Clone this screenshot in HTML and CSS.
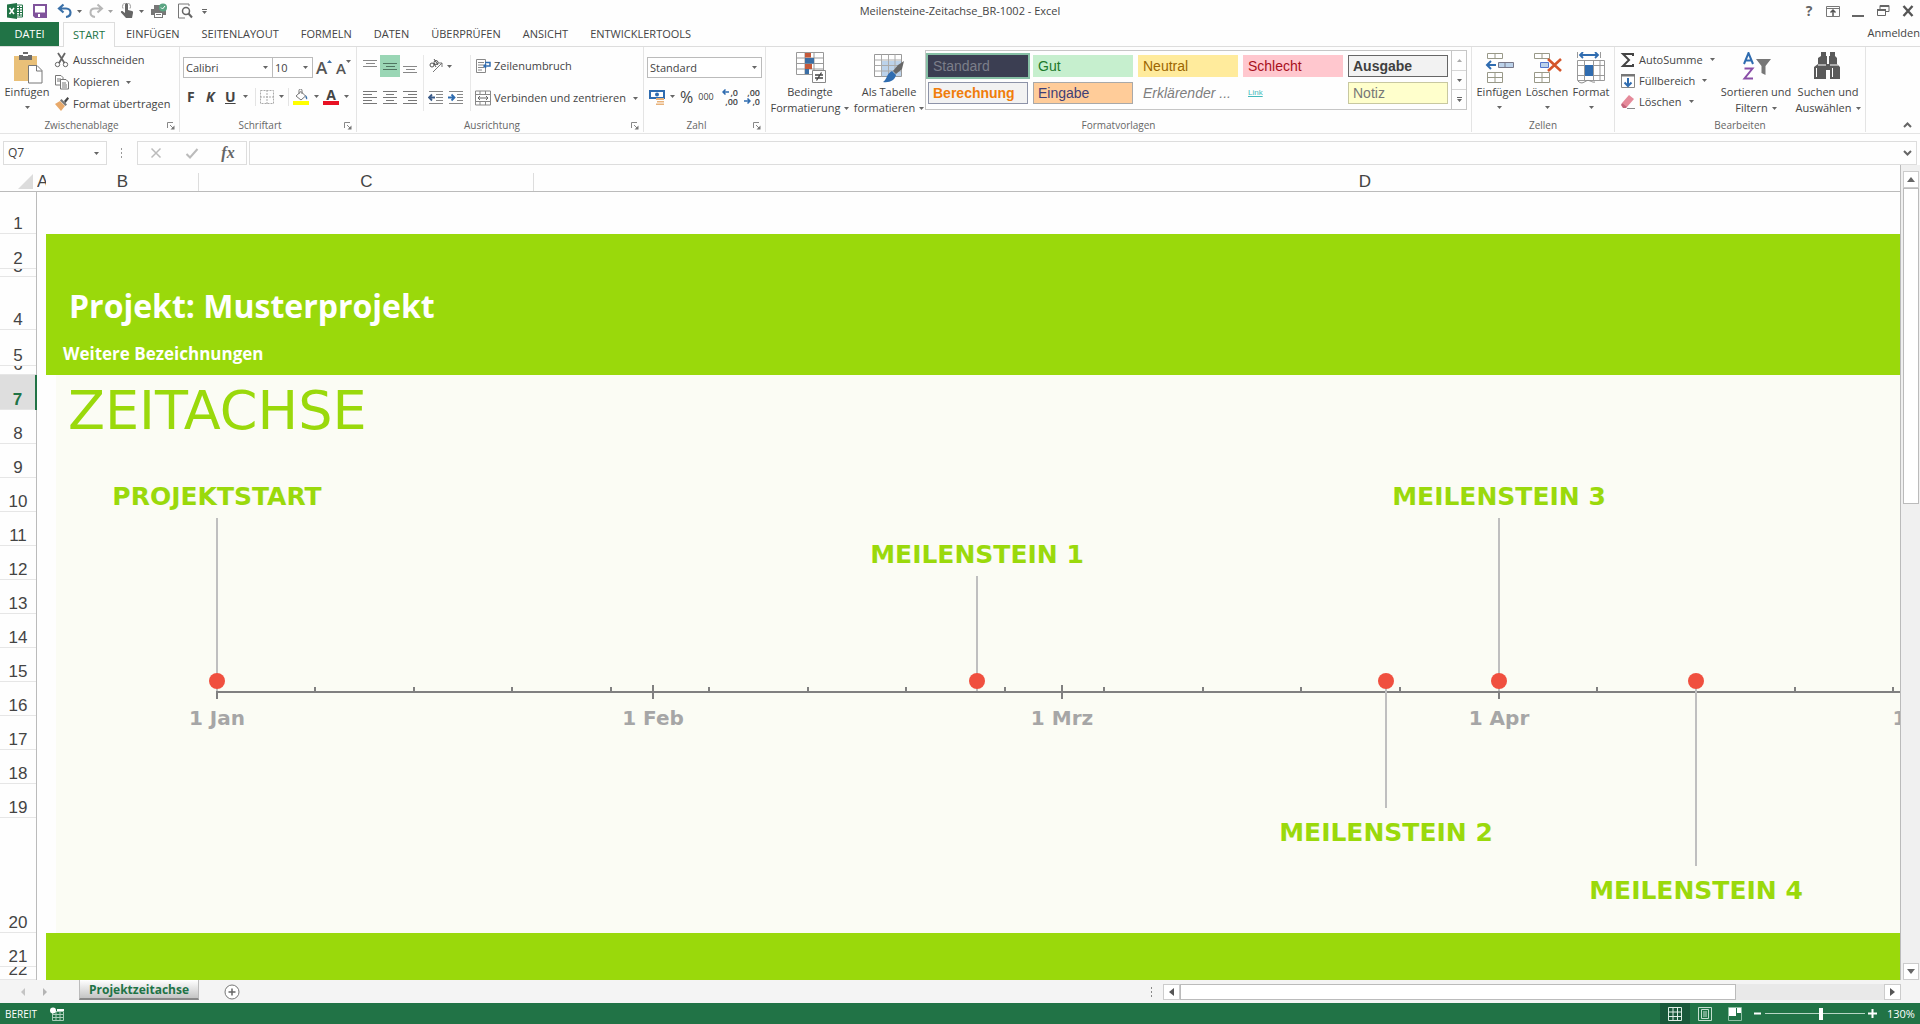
FILE: index.html
```html
<!DOCTYPE html>
<html lang="de">
<head>
<meta charset="utf-8">
<title>Meilensteine-Zeitachse_BR-1002 - Excel</title>
<link rel="stylesheet" href="styles.css">
</head>
<body>
<svg class="defs" aria-hidden="true">
  <symbol id="arr" viewBox="0 0 5 3"><path d="M0 0h5L2.500 3z" fill="#666"/></symbol>
  <symbol id="launch" viewBox="0 0 8 8"><path d="M.5 6V.5H6M3 3l3 3" fill="none" stroke="#888"/><path d="M7.500 3.500v4h-4z" fill="#777"/></symbol>
</svg>

<header class="titlebar">
  <div class="quick">
    <svg class="ic16" viewBox="0 0 16 16"><path d="M9 2h6.500v12H9z" fill="#fff" stroke="#217346"/><path d="M10 4.500h5M10 7h5M10 9.500h5M10 12h5M12.500 3v10" stroke="#217346"/><path d="M0 1.500L10 0v16L0 14.500z" fill="#217346"/><path d="M2.500 5l4.500 6M7 5l-4.500 6" stroke="#fff" stroke-width="1.600"/></svg>
    <button aria-label="Speichern"><svg class="ic16" viewBox="0 0 16 16"><path d="M2 2h12v12H3.500L2 12.500z" fill="#fff" stroke="#80539b" stroke-width="2"/><path d="M3 9.500h10V14H3z" fill="#80539b"/><path d="M6 11h2v3H6z" fill="#fff"/></svg></button>
    <button aria-label="Rückgängig" class="wide"><svg class="ic16" viewBox="0 0 16 16"><path d="M6.500 1.500L2 5.500l4.500 4M2.500 5.500H9c6 0 6 8 0 8.500" fill="none" stroke="#3a70a8" stroke-width="2.200"/></svg><svg class="arr"><use href="#arr"/></svg></button>
    <button aria-label="Wiederholen" class="wide faded"><svg class="ic16" viewBox="0 0 16 16"><path d="M9.500 1.500L14 5.500l-4.500 4M13.500 5.500H7c-6 0-6 8 0 8.500" fill="none" stroke="#888" stroke-width="2"/></svg><svg class="arr"><use href="#arr"/></svg></button>
    <button aria-label="Touch-/Mausmodus" class="wide"><svg class="ic16" viewBox="0 0 16 16"><path d="M6 1.500a1.500 1.500 0 0 1 3 0V7l4 1c1 .3 1.200 1 1 2l-1 5H7L2 9.500c-.6-1 .8-2 2-1l2 1.500z" fill="#666"/><path d="M4 5.500a4 4 0 1 1 7 0" fill="none" stroke="#999"/></svg><svg class="arr"><use href="#arr"/></svg></button>
    <button aria-label="Schnelldruck"><svg class="ic18" viewBox="0 0 18 16"><path d="M4 6V2h8v4M1 6h15v6h-3v3H4v-3H1z" fill="#777"/><path d="M5 10h7v4H5z" fill="#fff"/><path d="M6 11.500h5" stroke="#777"/><circle cx="13" cy="4.500" r="4" fill="#5ba583"/><path d="M11 4.500l1.500 1.500L15 3" fill="none" stroke="#fff"/></svg></button>
    <button aria-label="Seitenansicht"><svg class="ic16" viewBox="0 0 16 16"><path d="M12 3V1H1.500v14H8" fill="none" stroke="#777"/><circle cx="9" cy="8" r="3.500" fill="#fff" stroke="#666" stroke-width="1.500"/><path d="M11.500 10.500L15 14.500" stroke="#666" stroke-width="2"/></svg></button>
    <button aria-label="Symbolleiste anpassen"><svg class="arr over" viewBox="0 0 5 5"><path d="M0 0h5v1H0zM0 2h5L2.500 5z" fill="#666"/></svg></button>
  </div>
  <h1 class="doc">Meilensteine-Zeitachse_BR-1002 - Excel</h1>
  <div class="window">
    <button aria-label="Hilfe" class="help">?</button>
    <button aria-label="Menüband-Anzeigeoptionen"><svg class="ic14" viewBox="0 0 14 14"><path d="M.5 2.500h13v10H.5zM.5 4.500h13" fill="none" stroke="#777"/><path d="M7 12V7M4.500 8.500L7 6l2.500 2.500" fill="none" stroke="#555" stroke-width="1.500"/></svg></button>
    <button aria-label="Minimieren"><svg class="ic14" viewBox="0 0 14 14"><path d="M1 11h12v2H1z" fill="#666"/></svg></button>
    <button aria-label="Verkleinern"><svg class="ic14" viewBox="0 0 14 14"><path d="M4 5V1.500h9v6h-3M1.500 5.500h8v6h-8z" fill="none" stroke="#666"/><path d="M4 1h9v2H4zM1 5h9v2H1z" fill="#666"/></svg></button>
    <button aria-label="Schließen"><svg class="ic14" viewBox="0 0 14 14"><path d="M2.500 2l9 10M11.500 2l-9 10" stroke="#555" stroke-width="2.400"/></svg></button>
  </div>
</header>

<nav class="tabs">
  <button class="file">DATEI</button>
  <button class="active">START</button>
  <button>EINFÜGEN</button>
  <button>SEITENLAYOUT</button>
  <button>FORMELN</button>
  <button>DATEN</button>
  <button>ÜBERPRÜFEN</button>
  <button>ANSICHT</button>
  <button>ENTWICKLERTOOLS</button>
  <a href="#" class="login">Anmelden</a>
</nav>

<section class="ribbon">
  <div class="group g-clip">
    <div class="body">
      <button class="big"><svg class="ic32" viewBox="0 0 32 32"><path d="M3 4h23v25H3z" fill="#e9c078"/><path d="M8 3h4V0h5v3h4v5H8z" fill="#6b6b6b"/><path d="M12 2h5v2h-5z" fill="#fff"/><path d="M17.500 13.500H26l5 5V31H17.500z" fill="#fff" stroke="#777"/><path d="M25.500 13.500V19H31" fill="none" stroke="#777"/></svg><span>Einfügen</span><svg class="arr below"><use href="#arr"/></svg></button>
      <div class="stack s22">
        <button><svg class="ic16" viewBox="0 0 16 16"><path d="M4 1l6.500 10M11 1L5 11" stroke="#666" stroke-width="1.800"/><circle cx="3.500" cy="12.500" r="2.200" fill="none" stroke="#666"/><circle cx="11.500" cy="12.500" r="2.200" fill="none" stroke="#666"/></svg>Ausschneiden</button>
        <button><svg class="ic16" viewBox="0 0 16 16"><path d="M1.500 1.500H7l2 2V11H1.500zM3 5h4M3 7h4" fill="#fff" stroke="#777"/><path d="M6.500 5.500H12l2.500 2.500v7h-8zM8 9h4M8 11h5M8 13h5" fill="#fff" stroke="#777"/></svg>Kopieren<svg class="arr"><use href="#arr"/></svg></button>
        <button><svg class="ic16" viewBox="0 0 16 16"><path d="M1 8l5-3 5 5-4 5z" fill="#e8a96a"/><path d="M6 4.500l5.500 5.500 1.500-1.500L7.500 3z" fill="#777"/><path d="M10 5l3.500-4 1.500 1.500L11.500 7z" fill="#444"/></svg>Format übertragen</button>
      </div>
    </div>
    <div class="caption launcher">Zwischenablage<svg class="launch"><use href="#launch"/></svg></div>
  </div>

  <div class="group g-font">
    <div class="body rows">
      <div class="line">
        <span class="pick font"><select aria-label="Schriftart"><option>Calibri</option></select><svg class="arr"><use href="#arr"/></svg></span><span class="pick size"><select aria-label="Schriftgrad"><option>10</option></select><svg class="arr"><use href="#arr"/></svg></span>
        <button aria-label="Vergrößern" class="grow">A<svg class="mark" viewBox="0 0 5 3"><path d="M0 3h5L2.500 0z" fill="#3a70a8"/></svg></button>
        <button aria-label="Verkleinern" class="grow small">A<svg class="mark"><use href="#arr"/></svg></button>
      </div>
      <div class="line marks">
        <button class="chr"><b>F</b></button>
        <button class="chr"><b><i>K</i></b></button>
        <button class="chr u"><b>U</b><svg class="arr"><use href="#arr"/></svg></button>
        <i class="bar"></i>
        <button aria-label="Rahmen"><svg class="ic14" viewBox="0 0 14 14"><path d="M.5.500h13v13H.5zM7 0v14M0 7h14" fill="none" stroke="#aaa" stroke-dasharray="2 1"/></svg><svg class="arr"><use href="#arr"/></svg></button>
        <i class="bar"></i>
        <button aria-label="Füllfarbe"><svg class="ic16" viewBox="0 0 16 16"><path d="M3 7l5-4.500L12.500 7 8 11z" fill="#fff" stroke="#777"/><path d="M6 5V1.500a1.500 1.500 0 0 1 3 0V5" fill="none" stroke="#777"/><path d="M12.500 6c2 2 2 3 1.500 4.500-1-.5-2-2-1.500-4.500z" fill="#3a70a8"/><path d="M0 12h16v4H0z" fill="#ff0"/></svg><svg class="arr"><use href="#arr"/></svg></button>
        <button aria-label="Schriftfarbe" class="fc"><span>A</span><svg class="arr"><use href="#arr"/></svg></button>
      </div>
    </div>
    <div class="caption launcher">Schriftart<svg class="launch"><use href="#launch"/></svg></div>
  </div>

  <div class="group g-align">
    <div class="body cols">
      <div class="aligns">
        <button aria-label="Oben"><svg class="ic14" viewBox="0 0 14 14"><path d="M0 1.500h14M3 4.500h9M0 7.500h14" stroke="#888"/></svg></button>
        <button aria-label="Mitte" class="on"><svg class="ic14" viewBox="0 0 14 14"><path d="M0 4.500h14M3 7.500h9M0 10.500h14" stroke="#4f7561"/></svg></button>
        <button aria-label="Unten"><svg class="ic14" viewBox="0 0 14 14"><path d="M0 7.500h14M3 10.500h9M0 13.500h14" stroke="#888"/></svg></button>
        <button aria-label="Links"><svg class="ic14" viewBox="0 0 14 14"><path d="M0 .5h14M0 3.500h9M0 6.500h14M0 9.500h9M0 12.500h14" stroke="#777"/></svg></button>
        <button aria-label="Zentriert"><svg class="ic14" viewBox="0 0 14 14"><path d="M0 .5h14M3 3.500h8M0 6.500h14M3 9.500h8M0 12.500h14" stroke="#777"/></svg></button>
        <button aria-label="Rechts"><svg class="ic14" viewBox="0 0 14 14"><path d="M0 .5h14M5 3.500h9M0 6.500h14M5 9.500h9M0 12.500h14" stroke="#777"/></svg></button>
      </div>
      <div class="indents">
        <button aria-label="Ausrichtung" class="orient"><svg class="ic16" viewBox="0 0 16 16"><path d="M5 14L14 5M14 9V5h-4" fill="none" stroke="#777"/><circle cx="4" cy="7" r="2" fill="none" stroke="#555"/><circle cx="8" cy="4.500" r="2" fill="none" stroke="#555"/><path d="M5.500 5l2.500 4M6 1l4 6" stroke="#555"/></svg><svg class="arr"><use href="#arr"/></svg></button>
        <button aria-label="Einzug verkleinern"><svg class="ic16" viewBox="0 0 16 16"><path d="M1 1.500h14M8 4.500h7M8 7.500h7M8 10.500h7M1 13.500h14" stroke="#888"/><path d="M7 7.500H1M4 4.500l-3 3 3 3" fill="none" stroke="#3a5a88" stroke-width="1.800"/></svg></button>
        <button aria-label="Einzug vergrößern"><svg class="ic16" viewBox="0 0 16 16"><path d="M1 1.500h14M9 4.500h6M9 7.500h6M9 10.500h6M1 13.500h14" stroke="#888"/><path d="M0 7.500h6M3.500 4.500l3 3-3 3" fill="none" stroke="#2f6cb0" stroke-width="1.800"/></svg></button>
      </div>
      <div class="wraps">
        <button><svg class="ic16" viewBox="0 0 16 16"><path d="M1.500 1.500h9v13h-9zM3 4.500h6M3 7h6M3 9.500h6M3 12h4" fill="none" stroke="#888"/><path d="M10 4.500h5V8H9M11 6L9 8l2 2" fill="none" stroke="#2f6cb0" stroke-width="1.500"/></svg>Zeilenumbruch</button>
        <button><svg class="ic16" viewBox="0 0 16 16"><path d="M.5 1h15v14H.5zM.5 4.500h15M.5 11.500h15M5 1v3.500M10.500 1v3.500M5 11.500V15M10.500 11.500V15" fill="none" stroke="#888"/><path d="M3 8h10M5 6L3 8l2 2M11 6l2 2-2 2" fill="none" stroke="#666"/></svg>Verbinden und zentrieren<svg class="arr"><use href="#arr"/></svg></button>
      </div>
    </div>
    <div class="caption launcher">Ausrichtung<svg class="launch"><use href="#launch"/></svg></div>
  </div>

  <div class="group g-num">
    <div class="body rows">
      <div class="line"><span class="pick num"><select aria-label="Zahlenformat"><option>Standard</option></select><svg class="arr"><use href="#arr"/></svg></span></div>
      <div class="line numbers">
        <button aria-label="Buchhaltungszahlenformat"><svg class="ic16" viewBox="0 0 16 16"><path d="M1 2h14v7H1z" fill="#fff" stroke="#2f6cb0" stroke-width="2"/><circle cx="8" cy="5.500" r="2" fill="#2f6cb0"/><path d="M7 9h8v2H7zM8 12h7v1.500H8zM7 14.500h8V16H7z" fill="#e8b27a"/></svg><svg class="arr"><use href="#arr"/></svg></button>
        <button class="pct">%</button>
        <button class="thou">000</button>
        <button class="dec" aria-label="Dezimalstelle hinzufügen"><span><svg class="mini" viewBox="0 0 7 6"><path d="M7 3H1M3.500.500L1 3l2.500 2.500" fill="none" stroke="#2f6cb0" stroke-width="1.500"/></svg>,0</span><span>,00</span></button>
        <button class="dec" aria-label="Dezimalstelle löschen"><span>,00</span><span><svg class="mini" viewBox="0 0 7 6"><path d="M0 3h6M3.500.500L6 3 3.500 5.500" fill="none" stroke="#2f6cb0" stroke-width="1.500"/></svg>,0</span></button>
      </div>
    </div>
    <div class="caption launcher">Zahl<svg class="launch"><use href="#launch"/></svg></div>
  </div>

  <div class="group g-style">
    <div class="body">
      <button class="big w1"><svg class="ic32" viewBox="0 0 32 32"><path d="M2.500.500h27v22h-27zM2.500 6h27M2.500 11.500h27M2.500 17h27M11 .5v22M20 .5v22" fill="#fff" stroke="#999"/><path d="M11 1h6v4.500h-6zM11 12h7v5h-7z" fill="#c5593a"/><path d="M11 6h9v5.500h-9zM11 17h4v5h-4z" fill="#3a6ea5"/><path d="M18.500 18.500h13v12h-13z" fill="#fff" stroke="#888"/><path d="M21 23h8M21 26h8M27.500 20.500l-5 8" stroke="#444" stroke-width="1.300"/></svg><span>Bedingte</span><span>Formatierung<svg class="arr"><use href="#arr"/></svg></span></button>
      <button class="big w2"><svg class="ic32" viewBox="0 0 32 32"><path d="M1.500 2.500h27v22h-27z" fill="#fff" stroke="#999"/><path d="M9 9h19v15H9z" fill="#bcd2ea"/><path d="M1.500 8h27M1.500 13.500h27M1.500 19h27M8.500 2.500v22M15.500 2.500v22M22 2.500v22" fill="none" stroke="#aaa"/><path d="M31 9l-2 8-6 5-3-3 5-6z" fill="#666"/><path d="M19 19l4 4c-1 5-6 8-13 7 4-2 3-8 9-11z" fill="#2f6cb0"/></svg><span>Als Tabelle</span><span>formatieren<svg class="arr"><use href="#arr"/></svg></span></button>
      <div class="gallery">
        <div class="styles">
          <button class="st-std">Standard</button><button class="st-gut">Gut</button><button class="st-neu">Neutral</button><button class="st-bad">Schlecht</button><button class="st-out">Ausgabe</button>
          <button class="st-calc">Berechnung</button><button class="st-in">Eingabe</button><button class="st-exp">Erklärender ...</button><button class="st-link">Link</button><button class="st-note">Notiz</button>
        </div>
        <div class="steps">
          <button aria-label="Nach oben"><svg class="arr dim" viewBox="0 0 5 3"><path d="M0 3h5L2.500 0z" fill="#aaa"/></svg></button>
          <button aria-label="Nach unten"><svg class="arr"><use href="#arr"/></svg></button>
          <button aria-label="Weitere"><svg class="arr over" viewBox="0 0 5 5"><path d="M0 0h5v1H0zM0 2h5L2.500 5z" fill="#666"/></svg></button>
        </div>
      </div>
    </div>
    <div class="caption">Formatvorlagen</div>
  </div>

  <div class="group g-cells">
    <div class="body">
      <button class="big"><svg class="ic32" viewBox="0 0 32 32"><path d="M4.500 1.500h15v5h-15zM12 1.500v5M4.500 20.500h15v10h-15zM12 20.500v10M4.500 25.500h15" fill="#fff" stroke="#998"/><path d="M15.500 10.500h15v5h-15zM22 10.500v5" fill="#bcd2ea" stroke="#778"/><path d="M13 13H4M8 9l-4 4 4 4" fill="none" stroke="#2f6cb0" stroke-width="2"/></svg><span>Einfügen</span><svg class="arr below"><use href="#arr"/></svg></button>
      <button class="big"><svg class="ic32" viewBox="0 0 32 32"><path d="M3.500 1.500h15v5h-15zM11 1.500v5M3.500 20.500h15v10h-15zM11 20.500v10M3.500 25.500h15" fill="#fff" stroke="#998"/><path d="M9.500 10.500h8v5h-8z" fill="#bcd2ea" stroke="#57c"/><path d="M17 7l13 12M30 7L17 19" stroke="#d4552b" stroke-width="2.600"/></svg><span>Löschen</span><svg class="arr below"><use href="#arr"/></svg></button>
      <button class="big"><svg class="ic32" viewBox="0 0 32 32"><path d="M2.500 0v6M25.500 0v6" stroke="#999"/><path d="M5 3h18M8 0L5 3l3 3M20 0l3 3-3 3" fill="none" stroke="#2f6cb0" stroke-width="1.800"/><path d="M2.500 8.500h27v20h-27zM2.500 13.500h27M2.500 23.500h27M9.500 8.500v20M18.500 8.500v20M25 8.500v20" fill="#fff" stroke="#999"/><path d="M10 13h8v11h-8z" fill="#2f6cb0"/><path d="M3 29c3 3 5 2 8 0s6 2 9 1" fill="none" stroke="#888"/></svg><span>Format</span><svg class="arr below"><use href="#arr"/></svg></button>
    </div>
    <div class="caption">Zellen</div>
  </div>

  <div class="group g-edit">
    <div class="body">
      <div class="stack s21">
        <button><svg class="ic16" viewBox="0 0 16 16"><path d="M13 4V2H3l6 6-6 6h10v-2" fill="none" stroke="#444" stroke-width="2"/></svg>AutoSumme<svg class="arr"><use href="#arr"/></svg></button>
        <button><svg class="ic16" viewBox="0 0 16 16"><path d="M1.500 1.500h13v13h-13z" fill="#fff" stroke="#888"/><path d="M1 1h14v2.500H1z" fill="#777"/><path d="M8 5v8M4.500 9.500L8 13l3.500-3.500" fill="none" stroke="#2f6cb0" stroke-width="2"/></svg>Füllbereich<svg class="arr"><use href="#arr"/></svg></button>
        <button><svg class="ic16" viewBox="0 0 16 16"><path d="M2 9l7-8 5 4-7 8H4z" fill="#e58a9a"/><path d="M2 9l5 4-1 1H3L1 11z" fill="#c4647a"/><path d="M7 14.500h8" stroke="#888"/></svg>Löschen<svg class="arr"><use href="#arr"/></svg></button>
      </div>
      <button class="big w3"><svg class="ic32" viewBox="0 0 32 32"><path d="M4 12L8.500 1l4.500 11M5.500 8.500h6" fill="none" stroke="#2f6cb0" stroke-width="2"/><path d="M4.500 16.500h8l-8 10h8.500" fill="none" stroke="#8a4fa8" stroke-width="2"/><path d="M16 7h15l-5.500 7v9l-4-2v-7z" fill="#777"/></svg><span>Sortieren und</span><span>Filtern<svg class="arr"><use href="#arr"/></svg></span></button>
      <button class="big w4"><svg class="ic32" viewBox="0 0 32 32"><path d="M9 0h5v4h1v8h2V4h1V0h5v4l2 2v6l3 3v12H18v-9h-4v9H2V15l4-3V6l3-2z" fill="#5a5a5a"/><path d="M6 13h8M18 13h8M4.500 16v9M20.500 16v9" stroke="#fff"/></svg><span>Suchen und</span><span>Auswählen<svg class="arr"><use href="#arr"/></svg></span></button>
    </div>
    <div class="caption">Bearbeiten</div>
  </div>
  <button class="collapse" aria-label="Menüband reduzieren"><svg viewBox="0 0 9 6"><path d="M1 5l3.500-3.500L8 5" fill="none" stroke="#666" stroke-width="2"/></svg></button>
</section>

<section class="formula">
  <span class="pick name"><input aria-label="Namenfeld" value="Q7"><svg class="arr"><use href="#arr"/></svg></span>
  <svg class="dots" viewBox="0 0 3 11"><path d="M1 1h1v2H1zM1 5h1v2H1zM1 9h1v2H1z" fill="#999"/></svg>
  <div class="fx">
    <button aria-label="Abbrechen"><svg class="ic14" viewBox="0 0 14 14"><path d="M2.500 2.500l9 9M11.500 2.500l-9 9" stroke="#bbb" stroke-width="1.500"/></svg></button>
    <button aria-label="Eingeben"><svg class="ic14" viewBox="0 0 14 14"><path d="M1.500 8l3.500 3.500L12.500 3" fill="none" stroke="#bbb" stroke-width="2"/></svg></button>
    <button class="fn" aria-label="Funktion einfügen">fx</button>
  </div>
  <div class="entry"><input aria-label="Bearbeitungsleiste"><svg viewBox="0 0 9 6"><path d="M1 1l3.500 3.500L8 1" fill="none" stroke="#666" stroke-width="2"/></svg></div>
</section>

<main class="work">
  <div class="sheet">
    <table>
      <colgroup><col class="c-head"><col class="c-a"><col class="c-b"><col class="c-c"><col class="c-d"></colgroup>
      <thead><tr><th><svg class="corner" viewBox="0 0 15 15"><path d="M15 0v15H0z" fill="#dcdcdc"/></svg></th><th class="colname first">A</th><th class="colname">B</th><th class="colname">C</th><th class="colname">D</th></tr></thead>
      <tbody>
        <tr><th><span class="r42">1</span></th><td colspan="4"></td></tr>
        <tr><th><span class="r35">2</span></th><td></td><td colspan="3" class="green"></td></tr>
        <tr><th><span class="r8">3</span></th><td></td><td colspan="3" class="green"></td></tr>
        <tr><th><span class="r53">4</span></th><td></td><td colspan="3" class="green title">Projekt: Musterprojekt</td></tr>
        <tr><th><span class="r36">5</span></th><td></td><td colspan="3" class="green sub">Weitere Bezeichnungen</td></tr>
        <tr><th><span class="r9">6</span></th><td></td><td colspan="3" class="green"></td></tr>
        <tr><th class="current"><span class="r35">7</span></th><td colspan="4"></td></tr>
        <tr><th><span class="r34">8</span></th><td colspan="4"></td></tr>
        <tr><th><span class="r34">9</span></th><td colspan="4"></td></tr>
        <tr><th><span class="r34">10</span></th><td colspan="4"></td></tr>
        <tr><th><span class="r34">11</span></th><td colspan="4"></td></tr>
        <tr><th><span class="r34">12</span></th><td colspan="4"></td></tr>
        <tr><th><span class="r34">13</span></th><td colspan="4"></td></tr>
        <tr><th><span class="r34">14</span></th><td colspan="4"></td></tr>
        <tr><th><span class="r34">15</span></th><td colspan="4"></td></tr>
        <tr><th><span class="r34">16</span></th><td colspan="4"></td></tr>
        <tr><th><span class="r34">17</span></th><td colspan="4"></td></tr>
        <tr><th><span class="r34">18</span></th><td colspan="4"></td></tr>
        <tr><th><span class="r34">19</span></th><td colspan="4"></td></tr>
        <tr><th><span class="r115">20</span></th><td colspan="4"></td></tr>
        <tr><th><span class="r34">21</span></th><td></td><td colspan="3" class="green"></td></tr>
        <tr><th><span class="r13">22</span></th><td></td><td colspan="3" class="green"></td></tr>
      </tbody>
    </table>
    <div class="chart">
      <h2>ZEITACHSE</h2>
      <div class="axis"></div>
      <i class="tick major" style="left:161px"></i><i class="tick" style="left:259px"></i><i class="tick" style="left:358px"></i><i class="tick" style="left:456px"></i><i class="tick" style="left:555px"></i>
      <i class="tick major" style="left:597px"></i><i class="tick" style="left:653px"></i><i class="tick" style="left:752px"></i><i class="tick" style="left:850px"></i><i class="tick" style="left:949px"></i>
      <i class="tick major" style="left:1006px"></i><i class="tick" style="left:1048px"></i><i class="tick" style="left:1147px"></i><i class="tick" style="left:1245px"></i><i class="tick" style="left:1344px"></i>
      <i class="tick major" style="left:1443px"></i><i class="tick" style="left:1541px"></i><i class="tick" style="left:1640px"></i><i class="tick" style="left:1739px"></i><i class="tick" style="left:1837px"></i>
      <span class="month" style="left:161px">1 Jan</span>
      <span class="month" style="left:597px">1 Feb</span>
      <span class="month" style="left:1006px">1 Mrz</span>
      <span class="month" style="left:1443px">1 Apr</span>
      <span class="month" style="left:1867px">1 Mai</span>
      <div class="stone up tall" style="left:161px"><b>PROJEKTSTART</b></div>
      <div class="stone up" style="left:921px"><b>MEILENSTEIN 1</b></div>
      <div class="stone down" style="left:1330px"><b>MEILENSTEIN 2</b></div>
      <div class="stone up tall" style="left:1443px"><b>MEILENSTEIN 3</b></div>
      <div class="stone down tall" style="left:1640px"><b>MEILENSTEIN 4</b></div>
    </div>
  </div>
  <div class="vscroll">
    <button aria-label="Nach oben scrollen"><svg viewBox="0 0 8 5"><path d="M0 5h8L4 0z" fill="#666"/></svg></button>
    <div class="thumb"></div>
    <button aria-label="Nach unten scrollen"><svg viewBox="0 0 8 5"><path d="M0 0h8L4 5z" fill="#666"/></svg></button>
  </div>
</main>

<div class="sheetbar">
  <div class="steps2">
    <button aria-label="Zurück"><svg viewBox="0 0 5 8"><path d="M5 0v8L1 4z" fill="#c4c4c4"/></svg></button>
    <button aria-label="Weiter"><svg viewBox="0 0 5 8"><path d="M0 0v8l4-4z" fill="#b4b4b4"/></svg></button>
  </div>
  <button class="sheettab">Projektzeitachse</button>
  <button class="add" aria-label="Neues Blatt"><svg viewBox="0 0 16 16"><circle cx="8" cy="8" r="7" fill="#fff" stroke="#777"/><path d="M8 4.500v7M4.500 8h7" stroke="#666" stroke-width="1.500"/></svg></button>
  <svg class="dots" viewBox="0 0 3 11"><path d="M1 1h1v2H1zM1 5h1v2H1zM1 9h1v2H1z" fill="#888"/></svg>
  <div class="hscroll">
    <button aria-label="Nach links scrollen"><svg viewBox="0 0 5 8"><path d="M5 0v8L0 4z" fill="#555"/></svg></button>
    <div class="track"><div class="thumb"></div></div>
    <button aria-label="Nach rechts scrollen"><svg viewBox="0 0 5 8"><path d="M0 0v8l5-4z" fill="#555"/></svg></button>
  </div>
</div>

<footer class="status">
  <span>BEREIT</span>
  <svg class="ic14 rec" viewBox="0 0 14 14"><path d="M2.500 4.500h11v9h-11zM2.500 7.500h11M2.500 10.500h11M6 4.500v9M10 4.500v9" fill="none" stroke="#a9cdb8"/><circle cx="3" cy="3.500" r="3" fill="#fff"/><path d="M7 2h7v2H7z" fill="#fff"/></svg>
  <div class="views">
    <button aria-label="Normal" class="on"><svg class="ic14" viewBox="0 0 14 14"><path d="M.5.500h13v13H.5zM.5 5h13M.5 9.500h13M5 .5v13M9.500.500v13" fill="none" stroke="#dfeee5"/></svg></button>
    <button aria-label="Seitenlayout"><svg class="ic14" viewBox="0 0 14 14"><path d="M.5.500h13v13H.5zM3.500 2.500h7v9h-7zM5 5h4M5 7h4M5 9h4" fill="none" stroke="#c5dfd0"/></svg></button>
    <button aria-label="Umbruchvorschau"><svg class="ic14" viewBox="0 0 14 14"><path d="M1 1h7v8H1zM9 1h4v5H9z" fill="#fff"/><path d="M.5.500h13v13H.5z" fill="none" stroke="#8fbfa4"/></svg></button>
  </div>
  <div class="zoom">
    <button aria-label="Verkleinern"><svg class="pm" viewBox="0 0 9 9"><path d="M1 3.500h7v2H1z" fill="#fff"/></svg></button>
    <input type="range" aria-label="Zoom" min="0" max="100" value="56">
    <button aria-label="Vergrößern"><svg class="pm" viewBox="0 0 9 9"><path d="M0 3.500h9v2H0zM3.500 0h2v9h-2z" fill="#fff"/></svg></button>
  </div>
  <span class="pctz">130%</span>
</footer>
</body>
</html>
```
FILE: styles.css
```css
* { box-sizing: border-box; }
body {
  margin: 0;
  height: 100vh;
  display: flex;
  flex-direction: column;
  overflow: hidden;
  background: #fefefe;
  color: #444;
  font: 11px/16px "Open Sans", "Noto Sans", sans-serif;
}
button, select, input {
  margin: 0;
  padding: 0;
  border: 0;
  background: none;
  color: inherit;
  font: inherit;
  border-radius: 0;
}
button {
  display: flex;
  align-items: center;
  white-space: nowrap;
  flex: none;
}
svg { flex: none; display: block; }
.defs { position: absolute; width: 0; height: 0; }
.ic14 { width: 14px; height: 14px; }
.ic16 { width: 16px; height: 16px; }
.ic18 { width: 18px; height: 16px; }
.ic32 { width: 32px; height: 32px; }
.arr { width: 5px; height: 3px; }
.arr.over { height: 5px; }

/* Title bar */
.titlebar {
  display: grid;
  grid-template-columns: 1fr auto 1fr;
  align-items: center;
  height: 22px;
  flex: none;
}
.quick { display: flex; align-items: center; gap: 9px; padding-left: 7px; }
.quick .wide { gap: 4px; width: 22px; }
.quick .faded { opacity: .6; }
.doc { margin: 0; font: inherit; }
.window { display: flex; justify-content: flex-end; gap: 11px; padding-right: 5px; }
.help { width: 12px; font-size: 14px; font-weight: 700; justify-content: center; color: #666; }

/* Tab strip */
.tabs { display: flex; height: 25px; flex: none; border-bottom: 1px solid #ddd; }
.tabs button { padding: 0 11px; }
.tabs .file { width: 59px; justify-content: center; background: #217346; color: #fff; margin-right: 4px; }
.tabs .active { width: 52px; justify-content: center; padding: 0; border: 1px solid #ddd; border-bottom: 0; height: 25px; background: #fefefe; color: #217346; }
.login { margin-left: auto; color: inherit; text-decoration: none; line-height: 22px; }

/* Ribbon */
.ribbon { display: flex; height: 87px; flex: none; border-bottom: 1px solid #e4e4e4; }
.group { display: grid; grid-template: 1fr 14px / minmax(0, 1fr); height: 85px; border-right: 1px solid #e4e4e4; flex: none; }
.body { display: flex; min-height: 0; }
.caption { position: relative; text-align: center; font-size: 10px; line-height: 14px; color: #666; }
.launcher { padding-right: 16px; }
.launch { position: absolute; right: 4px; top: 4px; width: 8px; height: 8px; }
.g-clip { width: 180px; }
.g-font { width: 177px; }
.g-align { width: 287px; }
.g-num { width: 122px; }
.g-style { width: 706px; }
.g-cells { width: 143px; }
.g-edit { width: 251px; }

.big { flex-direction: column; width: 48px; padding-top: 5px; height: 70px; }
.big span { display: flex; align-items: center; gap: 4px; }
.big .below { margin-top: 6px; }
.g-clip .big { margin: 0 3px; }
.stack button { gap: 3px; }
.stack .arr { margin-left: 4px; }
.s22 { padding-top: 2px; }
.s22 button { height: 22px; }
.s21 { padding-top: 2px; width: 102px; padding-left: 5px; }
.s21 button { height: 21px; }

.rows { flex-direction: column; padding: 10px 3px 0; gap: 8px; }
.line { display: flex; align-items: center; height: 21px; }
.pick { position: relative; display: flex; border: 1px solid #bbb; height: 21px; background: #fff; }
.pick select, .pick input { appearance: none; width: 100%; padding: 0 2px; outline: 0; }
.pick .arr { position: absolute; right: 4px; top: 8px; pointer-events: none; }
.font { width: 90px; }
.size { width: 41px; margin-left: -1px; }
.num { width: 116px; }
.grow { font-size: 17px; margin-left: 3px; width: 17px; font-weight: 600; color: #555; }
.grow.small { font-size: 15px; }
.grow .mark { width: 5px; height: 3px; align-self: flex-start; }
.marks { gap: 4px; padding-left: 4px; }
.chr { width: 15px; font-size: 14px; gap: 6px; }
.chr.u { width: 26px; text-decoration: underline; }
.bar { width: 1px; height: 18px; background: #e4e4e4; }
.marks button .arr, .numbers button .arr { margin-left: 5px; }
.chr.u .arr { margin-left: 1px; }
.fc span { width: 16px; height: 16px; border-bottom: 4px solid #e81123; font: 700 14px/12px "Open Sans", sans-serif; text-align: center; }

.cols { padding-top: 8px; }
.aligns { display: grid; grid-template-columns: repeat(3, 20px); grid-template-rows: 22px 22px; gap: 10px 0; padding-left: 3px; width: 66px; height: 56px; }
.aligns button { justify-content: center; }
.aligns .on { background: #9ad6b5; }
.indents { display: grid; grid-template-columns: 20px 20px; grid-template-rows: 22px 22px; gap: 10px 0; padding-left: 4px; width: 48px; border-left: 1px solid #e8e8e8; border-right: 1px solid #e8e8e8; height: 56px; }
.orient { grid-column: span 2; gap: 3px; }
.wraps { display: grid; grid-template-rows: 22px 22px; gap: 10px; padding-left: 4px; height: 56px; }
.wraps button { gap: 3px; }
.wraps .arr { margin-left: 4px; }

.numbers { gap: 5px; padding: 0 2px; }
.pct { font-size: 16px; }
.thou { font-size: 9px; margin-right: auto; }
.dec { display: block; width: 17px; font-size: 9px; line-height: 9px; font-weight: 600; }
.dec span { display: flex; align-items: center; justify-content: flex-end; gap: 1px; }
.mini { width: 7px; height: 6px; }

.w1 { width: 88px; }
.w2 { width: 70px; }
.w3 { width: 78px; }
.w4 { width: 66px; }
.gallery { display: flex; margin: 3px 0 0 1px; height: 60px; border: 1px solid #c6c6c6; }
.styles { display: grid; grid-template-columns: repeat(5, 100px); grid-template-rows: 22px 22px; gap: 5px; padding: 4px 3px 0 2px; font: 14px/18px "Liberation Sans", Arial, sans-serif; }
.styles button { padding: 0 4px; border: 1px solid transparent; }
.styles .st-std { background: #3b3e52; color: #7c7e8a; outline: 2px solid #86bfa5; outline-offset: 0; }
.styles .st-gut { background: #c6efce; color: #1d7a2b; }
.styles .st-neu { background: #ffeb9c; color: #9c6500; }
.styles .st-bad { background: #ffc7ce; color: #a80f1c; }
.styles .st-out { background: #f2f2f2; border-color: #666; font-weight: 700; color: #3f3f3f; }
.styles .st-calc { background: #f2f2f2; border-color: #8d93a8; font-weight: 700; color: #f07d0a; }
.styles .st-in { background: #ffcc99; border-color: #a9a9a9; color: #3f3f76; }
.styles .st-exp { font-style: italic; color: #7f7f7f; }
.styles .st-link { font-size: 8px; color: #4bb; text-decoration: underline; }
.styles .st-note { background: #ffffcc; border-color: #c8c8a0; color: #777; }
.steps { width: 15px; border-left: 1px solid #c6c6c6; display: flex; flex-direction: column; }
.steps button { flex: 1; justify-content: center; border-bottom: 1px solid #d6d6d6; }
.steps button:last-child { border-bottom: 0; }
.g-cells .body { padding-left: 3px; }
.g-cells .big:last-child { width: 40px; }
.collapse { margin: auto 8px 5px auto; }
.collapse svg { width: 9px; height: 6px; }

/* Formula bar */
.formula { display: flex; align-items: center; flex: none; height: 31px; padding: 6px 3px 0; }
.name { width: 104px; height: 24px; border-color: #ddd; }
.name input { padding-left: 4px; font-size: 12px; }
.name .arr { top: 10px; right: 7px; }
.dots { width: 3px; height: 11px; margin: 0 14px 0 13px; }
.fx { display: flex; align-items: center; width: 110px; height: 24px; border: 1px solid #ddd; }
.fx button { width: 36px; justify-content: center; }
.fx .fn { font: italic 700 16px/20px "Liberation Serif", serif; color: #666; }
.entry { flex: 1; display: flex; align-items: center; height: 24px; margin-left: 2px; border: 1px solid #ddd; padding-right: 4px; }
.entry input { flex: 1; outline: 0; }
.entry svg { width: 9px; height: 6px; }

/* Worksheet */
.work { flex: 1; display: flex; min-height: 0; }
.sheet { flex: 1; min-width: 0; overflow: hidden; position: relative; border-right: 1px solid #bbb; }
table { border-collapse: separate; border-spacing: 0; table-layout: fixed; width: 2196px; font: 17px/18px "Liberation Sans", Arial, sans-serif; }
th, td { padding: 0; font-weight: 400; }
.c-head { width: 37px; }
.c-a { width: 9px; }
.c-b { width: 153px; }
.c-c { width: 335px; }
thead th { height: 27px; border-bottom: 1px solid #bbb; vertical-align: bottom; }
.colname { background: linear-gradient(#ddd, #ddd) right bottom / 1px 18px no-repeat; }
.colname.first { overflow: hidden; background: none; text-align: left; }
.corner { width: 15px; height: 15px; margin: 0 0 2px 18px; }
tbody th { border-right: 1px solid #bbb; }
tbody th span { display: flex; flex-direction: column; justify-content: flex-end; overflow: hidden; border-bottom: 1px solid #e6e6e6; }
.r8 { height: 8px; }
.r9 { height: 9px; }
.r13 { height: 13px; }
.r34 { height: 34px; }
.r35 { height: 35px; }
.r36 { height: 36px; }
.r42 { height: 42px; }
.r53 { height: 53px; }
.r115 { height: 115px; }
.current { background: #dedede; color: #217346; font-weight: 700; border-right: 2px solid #217346; }
.green { background: #9ad90b; color: #fff; font-family: "Open Sans", sans-serif; font-weight: 700; vertical-align: bottom; }
.title { font-size: 32px; line-height: 40px; padding: 0 0 4px 23px; }
.sub { font-size: 17px; line-height: 24px; padding-left: 17px; }

/* Floating timeline drawing */
.chart {
  position: absolute;
  left: 56px;
  right: 0;
  top: 210px;
  height: 558px;
  overflow: hidden;
  background: #fbfcf4;
  font-family: "DejaVu Sans", Verdana, sans-serif;
}
.chart h2 { margin: 0; padding: 6px 0 0 12px; font-size: 54px; line-height: 60px; font-weight: 400; color: #9ad90b; }
.axis { position: absolute; left: 161px; right: 0; top: 316px; height: 2px; background: #808080; }
.tick { position: absolute; top: 312px; width: 2px; height: 5px; margin-left: -1px; background: #808080; }
.tick.major { top: 310px; height: 14px; }
.month { position: absolute; top: 331px; transform: translateX(-50%); font-size: 20px; line-height: 24px; font-weight: 700; color: #a6a6a6; white-space: nowrap; }
.stone { position: absolute; width: 2px; margin-left: -1px; background: #bfbfbf; }
.stone::after { content: ""; position: absolute; left: -7px; width: 16px; height: 16px; border-radius: 50%; background: #f0503f; }
.stone b { position: absolute; left: 1px; transform: translateX(-50%); font-size: 25px; line-height: 28px; color: #9ad90b; white-space: nowrap; }
.stone.up { top: 201px; height: 115px; }
.stone.up.tall { top: 143px; height: 173px; }
.stone.up b { top: -35px; }
.stone.up::after { bottom: 2px; }
.stone.down { top: 306px; height: 127px; }
.stone.down.tall { height: 185px; }
.stone.down b { bottom: -39px; }
.stone.down::after { top: -8px; }

.vscroll { width: 19px; display: flex; flex-direction: column; padding: 6px 1px 0 2px; background: #f0f0f0; }
.vscroll button { height: 17px; justify-content: center; background: #fff; border: 1px solid #ccc; }
.vscroll button:last-child { margin-top: auto; }
.vscroll svg { width: 8px; height: 5px; }
.vscroll .thumb { height: 316px; background: #fff; border: 1px solid #bbb; }

/* Sheet tabs */
.sheetbar { display: flex; align-items: center; flex: none; height: 23px; background: #f4f4f4; padding-right: 19px; }
.steps2 { display: flex; width: 79px; padding-left: 20px; gap: 18px; }
.steps2 svg { width: 5px; height: 8px; }
.sheettab { align-self: flex-start; width: 120px; height: 20px; padding-top: 1px; justify-content: center; font-size: 12px; font-weight: 700; color: #217346; background: linear-gradient(#fff, #c4c4c4); border: 1px solid #bbb; border-width: 0 1px 2px; border-bottom-color: #888; }
.add { margin: 0 auto 0 25px; }
.add svg { width: 16px; height: 16px; }
.hscroll { display: flex; width: 738px; height: 16px; margin-left: -4px; }
.hscroll button { width: 17px; justify-content: center; background: #fff; border: 1px solid #ccc; }
.hscroll button svg { width: 5px; height: 8px; }
.track { flex: 1; background: #e9e9e9; }
.hscroll .thumb { width: 79%; height: 16px; background: #fff; border: 1px solid #bbb; }

/* Status bar */
.status { display: flex; align-items: center; flex: none; height: 21px; padding: 0 5px; background: #217346; color: #fff; font-size: 10px; }
.rec { margin-left: 13px; }
.views { display: flex; margin-left: auto; }
.views button { width: 30px; height: 21px; justify-content: center; }
.views .on { background: #19583a; }
.zoom { display: flex; align-items: center; gap: 3px; margin-left: 3px; }
.pm { width: 9px; height: 9px; }
.zoom input { appearance: none; width: 100px; height: 12px; background: linear-gradient(#b8d6c5, #b8d6c5) center / 100% 1px no-repeat; }
.zoom input::-webkit-slider-thumb { appearance: none; width: 4px; height: 12px; background: #fff; }
.pctz { width: 28px; margin-left: 10px; font-size: 11px; }
```
